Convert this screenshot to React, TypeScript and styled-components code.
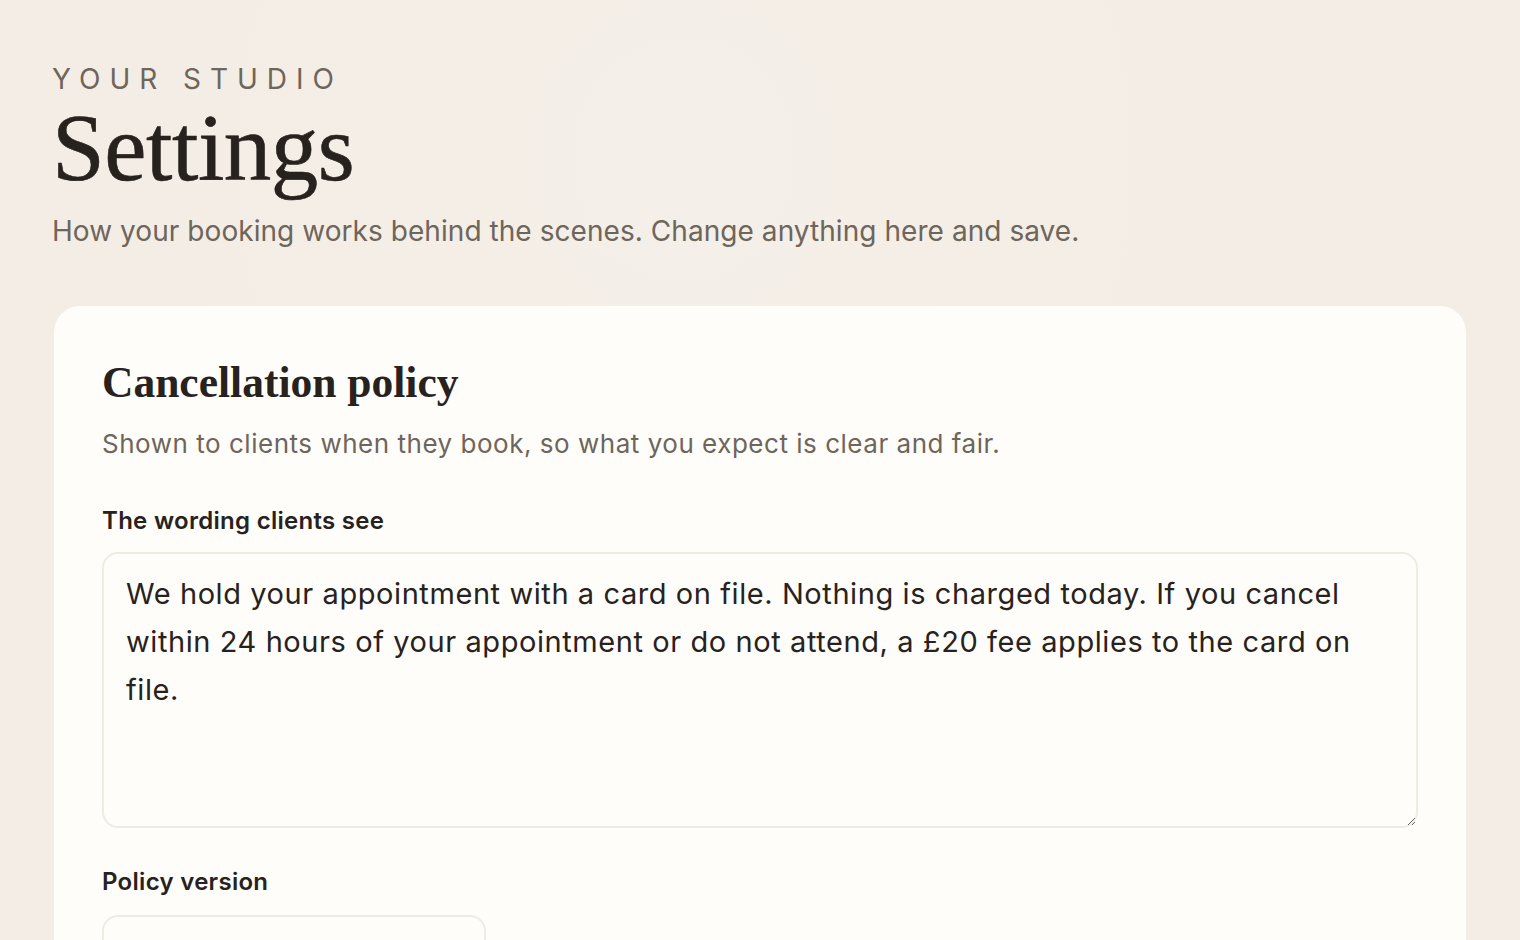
import React, { useState } from 'react';
import styled, { createGlobalStyle } from 'styled-components';

const GlobalStyle = createGlobalStyle`
  html, body {
    margin: 0;
    padding: 0;
  }
  body {
    background: radial-gradient(ellipse at 45% 15%, #f4efe9 0%, #f4ede5 45%, #f4ede6 100%);
    font-family: Inter, "Noto Sans", sans-serif;
    color: #2a2520;
    min-height: 100vh;
  }
`;

const Page = styled.main`
  padding: 62px 54px 0;
`;

const Header = styled.header`
  display: flex;
  flex-direction: column;
  margin: 0 0 57px -2px;
`;

const Eyebrow = styled.div`
  font-size: 28px;
  letter-spacing: 0.32em;
  color: #6e655b;
  line-height: 34px;
`;

const Title = styled.h1`
  margin: 0;
  font-family: "Liberation Serif", "DejaVu Serif", serif;
  font-weight: 400;
  font-size: 95px;
  line-height: 104px;
  color: #27221d;
  letter-spacing: -0.005em;
  -webkit-text-stroke: 0.6px #27221d;
`;

const Lead = styled.p`
  margin: 13px 0 0;
  font-size: 28px;
  line-height: 36px;
  letter-spacing: 0.002em;
  color: #6e655b;
`;

const Card = styled.section`
  background: #fefdf9;
  border-radius: 26px;
  padding: 50px 48px 0;
  min-height: 700px;
  box-shadow: 0 1px 2px rgba(120, 100, 80, 0.04);
`;

const CardTitle = styled.h2`
  margin: 0;
  font-family: "Liberation Serif", "DejaVu Serif", serif;
  font-weight: 700;
  font-size: 43.5px;
  line-height: 52px;
  color: #27221d;
`;

const CardLead = styled.p`
  margin: 19px 0 0;
  font-size: 26px;
  line-height: 34px;
  letter-spacing: 0.02em;
  color: #6e655b;
`;

const Field = styled.div<{ $gap: number }>`
  display: flex;
  flex-direction: column;
  margin-top: ${(p) => p.$gap}px;
`;

const Label = styled.label<{ $space?: number }>`
  font-size: 24px;
  font-weight: 600;
  line-height: 32px;
  letter-spacing: 0.012em;
  color: #27221d;
  margin-bottom: ${(p) => p.$space ?? 15}px;
`;

const TextArea = styled.textarea`
  box-sizing: border-box;
  width: 100%;
  height: 276px;
  padding: 16px 22px;
  border: 2px solid #eeebe3;
  border-radius: 16px;
  background: #fefdf9;
  font-family: Inter, "Noto Sans", sans-serif;
  font-size: 29px;
  line-height: 48px;
  letter-spacing: 0.02em;
  color: #27221d;
  resize: vertical;
  outline: none;
`;

const Input = styled.input`
  box-sizing: border-box;
  width: 384px;
  height: 64px;
  padding: 0 22px;
  border: 2px solid #eeebe3;
  border-radius: 16px;
  background: #fefdf9;
  font-family: Inter, "Noto Sans", sans-serif;
  font-size: 28px;
  color: #27221d;
  outline: none;
`;

export default function App() {
  const [wording, setWording] = useState(
    'We hold your appointment with a card on file. Nothing is charged today. If you cancel within 24 hours of your appointment or do not attend, a £20 fee applies to the card on file.'
  );
  const [version, setVersion] = useState('');

  return (
    <>
      <GlobalStyle />
      <Page>
        <Header>
          <Eyebrow>YOUR STUDIO</Eyebrow>
          <Title>Settings</Title>
          <Lead>How your booking works behind the scenes. Change anything here and save.</Lead>
        </Header>
        <Card>
          <CardTitle>Cancellation policy</CardTitle>
          <CardLead>Shown to clients when they book, so what you expect is clear and fair.</CardLead>
          <Field $gap={44}>
            <Label htmlFor="wording">The wording clients see</Label>
            <TextArea id="wording" value={wording} onChange={(e) => setWording(e.target.value)} />
          </Field>
          <Field $gap={38}>
            <Label htmlFor="version" $space={17}>Policy version</Label>
            <Input id="version" value={version} onChange={(e) => setVersion(e.target.value)} />
          </Field>
        </Card>
      </Page>
    </>
  );
}
